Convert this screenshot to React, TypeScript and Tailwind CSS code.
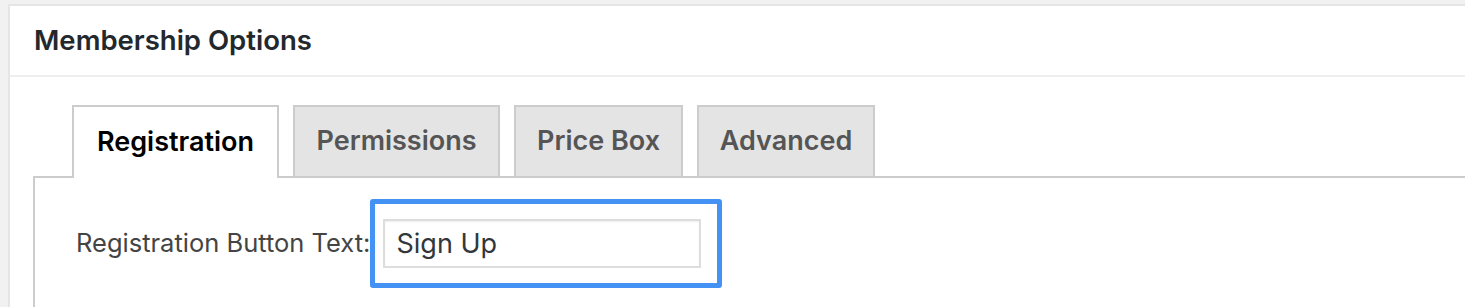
import React from 'react';

const tabs = [
  { label: 'Registration', width: 'w-[207px]', active: true },
  { label: 'Permissions', width: 'w-[207px]', active: false },
  { label: 'Price Box', width: 'w-[169px]', active: false },
  { label: 'Advanced', width: 'w-[178px]', active: false },
];

export default function App() {
  return (
    <div className="h-[307px] overflow-hidden bg-[#f1f1f1] pl-[8px] pt-[4px] font-['Inter',sans-serif]">
      <div className="h-[400px] border-l-2 border-t-2 border-[#e5e5e5] bg-white">
        {/* Header */}
        <div className="flex h-[71px] items-center border-b-2 border-[#eeeeee] pl-[24px]">
          <h2 className="text-[27.5px] font-semibold text-[#23282d]">Membership Options</h2>
        </div>

        <div className="pl-[23px] pt-[28px]">
          {/* Tabs */}
          <div className="flex gap-[14px] pl-[39px]">
            {tabs.map((tab) => (
              <div
                key={tab.label}
                className={
                  tab.active
                    ? `${tab.width} relative z-10 -mb-[2px] flex h-[73px] items-center justify-center border-2 border-b-0 border-[#cccccc] bg-white text-[27px] font-semibold text-black`
                    : `${tab.width} flex h-[71px] items-center justify-center border-2 border-b-0 border-[#cccccc] bg-[#e4e4e4] text-[27px] font-semibold text-[#555555]`
                }
              >
                {tab.label}
              </div>
            ))}
          </div>

          {/* Tab content */}
          <div className="h-[200px] border-l-2 border-t-2 border-[#cccccc] pl-[41px] pt-[41px]">
            <div className="flex items-center">
              <label className="text-[25.5px] text-[#444444]">Registration Button Text:</label>
              <div className="relative ml-[13px]">
                <div className="h-[49px] w-[318px] border-2 border-[#dddddd] bg-white pl-[11px] text-[27px] leading-[45px] text-[#32373c] shadow-[inset_0_1px_2px_rgba(0,0,0,0.07)]">
                  Sign Up
                </div>
                <div className="pointer-events-none absolute -bottom-[20px] -left-[13px] -right-[21px] -top-[20px] rounded-[3px] border-[5px] border-[#4592f5]" />
              </div>
            </div>
          </div>
        </div>
      </div>
    </div>
  );
}
